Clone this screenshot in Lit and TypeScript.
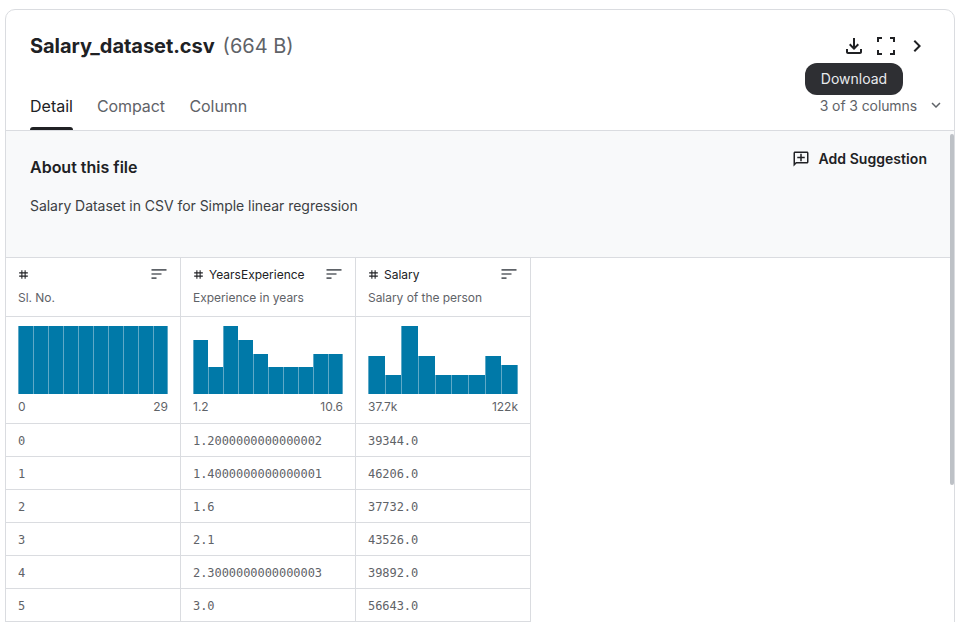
import { LitElement, html, css, svg } from "lit";
import { customElement } from "lit/decorators.js";

const P = {
  download: "M18 15v3H6v-3H4v3c0 1.1.9 2 2 2h12c1.1 0 2-.9 2-2v-3h-2zm-1-4l-1.41-1.41L13 12.17V4h-2v8.17L8.41 9.59 7 11l5 5 5-5z",
  chevron: "M10 6L8.59 7.41 13.17 12l-4.58 4.59L10 18l6-6z",
  expand: "M16.59 8.59L12 13.17 7.41 8.59 6 10l6 6 6-6z",
  comment: "M22 4c0-1.1-.9-2-2-2H4c-1.1 0-2 .9-2 2v12c0 1.1.9 2 2 2h14l4 4V4zm-2 13.17L18.83 16H4V4h16v13.17zM13 5h-2v4H7v2h4v4h2v-4h4V9h-4z",
  sort: "M3 18h6v-2H3v2zM3 6v2h18V6H3zm0 7h12v-2H3v2z",
  tag: "M20 10V8h-4V4h-2v4h-4V4H8v4H4v2h4v4H4v2h4v4h2v-4h4v4h2v-4h4v-2h-4v-4h4zm-6 4h-4v-4h4v4z",
};

const icon = (d: string, cls = "") =>
  html`<svg class="ic ${cls}" viewBox="0 0 24 24" fill="currentColor">${svg`<path d=${d}></path>`}</svg>`;

const columns = [
  { name: "", sub: "Sl. No.", min: "0", max: "29", bars: [68, 68, 68, 68, 68, 68, 68, 68, 68, 68] },
  { name: "YearsExperience", sub: "Experience in years", min: "1.2", max: "10.6", bars: [54, 27, 68, 54, 40, 27, 27, 27, 40, 40] },
  { name: "Salary", sub: "Salary of the person", min: "37.7k", max: "122k", bars: [38, 19, 68, 38, 19, 19, 19, 38, 29] },
];

const rows = [
  ["0", "1.2000000000000002", "39344.0"],
  ["1", "1.4000000000000001", "46206.0"],
  ["2", "1.6", "37732.0"],
  ["3", "2.1", "43526.0"],
  ["4", "2.3000000000000003", "39892.0"],
  ["5", "3.0", "56643.0"],
];

@customElement("app-root")
export class AppRoot extends LitElement {
  static styles = css`
    :host {
      display: block;
      height: 622px;
      overflow: hidden;
      background: #fff;
      font-family: Inter, "Liberation Sans", sans-serif;
      color: #202124;
    }
    .card {
      position: relative;
      margin: 9px 4px 0 5px;
      height: 640px;
      box-sizing: border-box;
      border: 1px solid #dadce0;
      border-radius: 10px 10px 0 0;
      overflow: hidden;
    }
    .ic { display: block; width: 24px; height: 24px; flex: none; }
    .head {
      box-sizing: border-box;
      height: 121px;
      border-bottom: 1px solid #dadce0;
      padding: 20px 21px 0 24px;
      display: flex;
      flex-direction: column;
    }
    .title-row { display: flex; align-items: center; height: 32px; }
    .title { font-size: 20px; font-weight: 700; line-height: 32px; letter-spacing: -0.05px; }
    .size { font-size: 20px; color: #5f6368; margin-left: 8px; line-height: 32px; }
    .actions { margin-left: auto; display: flex; align-items: center; }
    .btn { width: 32px; height: 32px; display: flex; align-items: center; justify-content: center; }
    .btn.last { margin-left: -1px; }
    .fs { width: 18px; height: 18px; display: block; }
    .tabs-row { display: flex; margin-top: 32px; height: 36px; }
    .tab { display: flex; flex-direction: column; margin-right: 24.5px; font-size: 16px; line-height: 24px; color: #5f6368; letter-spacing: -0.08px; }
    .tab.active { color: #202124; letter-spacing: 0; margin-right: 24px; }
    .tab i { display: block; height: 3px; margin-top: 9px; }
    .tab.active i { background: #202124; border-radius: 3px 3px 0 0; }
    .cols { margin-left: auto; display: flex; align-items: center; height: 22px; font-size: 14px; letter-spacing: -0.1px; color: #5f6368; margin-right: -12px; gap: 10px; }
    .cols .ic { width: 18px; height: 18px; }
    .about {
      box-sizing: border-box;
      height: 127px;
      background: #f8f9fa;
      border-bottom: 1px solid #dadce0;
      padding: 24px 27px 0 24px;
    }
    .about-top { display: flex; justify-content: space-between; }
    .about h3 { margin: 0; font-size: 16px; font-weight: 600; line-height: 24px; }
    .suggest { display: flex; align-items: center; font-size: 14px; font-weight: 600; line-height: 20px; letter-spacing: 0.05px; gap: 8px; margin-top: -8px; height: 24px; }
    .suggest .ic { width: 18px; height: 18px; transform: scaleX(-1); }
    .about p { margin: 17px 0 0; font-size: 14px; line-height: 20px; color: #3c4043; letter-spacing: -0.04px; }
    .table { display: grid; grid-template-columns: repeat(3, 175px); width: 525px; }
    .cell { box-sizing: border-box; border-right: 1px solid #dadce0; border-bottom: 1px solid #dadce0; }
    .h { height: 59px; padding: 7px 11px 0 12px; }
    .h-top { display: flex; align-items: center; height: 18px; font-size: 12px; font-weight: 400; gap: 4px; }
    .h-top .tag { width: 13px; height: 13px; margin: 1px 0 0 -1px; }
    .h-top .sort { width: 20px; height: 20px; margin-left: auto; color: #5f6368; }
    .h-sub { margin-top: 6px; font-size: 12px; line-height: 18px; color: #5f6368; letter-spacing: -0.04px; }
    .g { height: 107px; padding: 9px 12px 0; }
    .bars { display: flex; align-items: flex-end; height: 68px; }
    .bar { flex: 1; background: #0079a8; box-shadow: inset 1px 0 0 #5fa9c7; }
    .bar:last-child { box-shadow: inset 1px 0 0 #5fa9c7, inset -1px 0 0 #5fa9c7; }
    .range { display: flex; justify-content: space-between; font-size: 12px; line-height: 16px; color: #5f6368; margin-top: 5px; }
    .d {
      height: 33px;
      padding: 0 12px;
      font-family: "DejaVu Sans Mono", "Liberation Mono", monospace;
      font-size: 12px;
      letter-spacing: -0.06px;
      line-height: 34px;
      color: #5f6368;
    }
    .tooltip {
      position: absolute;
      left: 799px;
      top: 53px;
      width: 98px;
      height: 32px;
      border-radius: 12px;
      background: #2e2f33;
      color: #e8eaed;
      font-size: 14px;
      line-height: 32px;
      text-align: center;
    }
    .thumb {
      position: absolute;
      left: 944px;
      top: 124px;
      width: 4px;
      height: 351px;
      border-radius: 2px;
      background: #bdc1c6;
    }
  `;

  render() {
    return html`
      <div class="card">
        <div class="head">
          <div class="title-row">
            <span class="title">Salary_dataset.csv</span>
            <span class="size">(664 B)</span>
            <div class="actions">
              <div class="btn">${icon(P.download)}</div>
              <div class="btn">
                <svg class="fs" viewBox="0 0 18 18" fill="none" stroke="currentColor" stroke-width="2">
                  <path d="M1 5V1h4M13 1h4v4M17 13v4h-4M5 17H1v-4"></path>
                </svg>
              </div>
              <div class="btn last">${icon(P.chevron)}</div>
            </div>
          </div>
          <div class="tabs-row">
            <div class="tab active">Detail<i></i></div>
            <div class="tab">Compact<i></i></div>
            <div class="tab">Column<i></i></div>
            <div class="cols">3 of 3 columns ${icon(P.expand)}</div>
          </div>
        </div>
        <div class="about">
          <div class="about-top">
            <h3>About this file</h3>
            <div class="suggest">${icon(P.comment)}Add Suggestion</div>
          </div>
          <p>Salary Dataset in CSV for Simple linear regression</p>
        </div>
        <div class="table">
          ${columns.map(
            (c) => html`<div class="cell h">
              <div class="h-top">${icon(P.tag, "tag")}<span>${c.name}</span>${icon(P.sort, "sort")}</div>
              <div class="h-sub">${c.sub}</div>
            </div>`
          )}
          ${columns.map(
            (c) => html`<div class="cell g">
              <div class="bars">
                ${c.bars.map((b) => html`<div class="bar" style="height:${b}px"></div>`)}
              </div>
              <div class="range"><span>${c.min}</span><span>${c.max}</span></div>
            </div>`
          )}
          ${rows.map((r) => r.map((v) => html`<div class="cell d">${v}</div>`))}
        </div>
        <div class="tooltip">Download</div>
        <div class="thumb"></div>
      </div>
    `;
  }
}
